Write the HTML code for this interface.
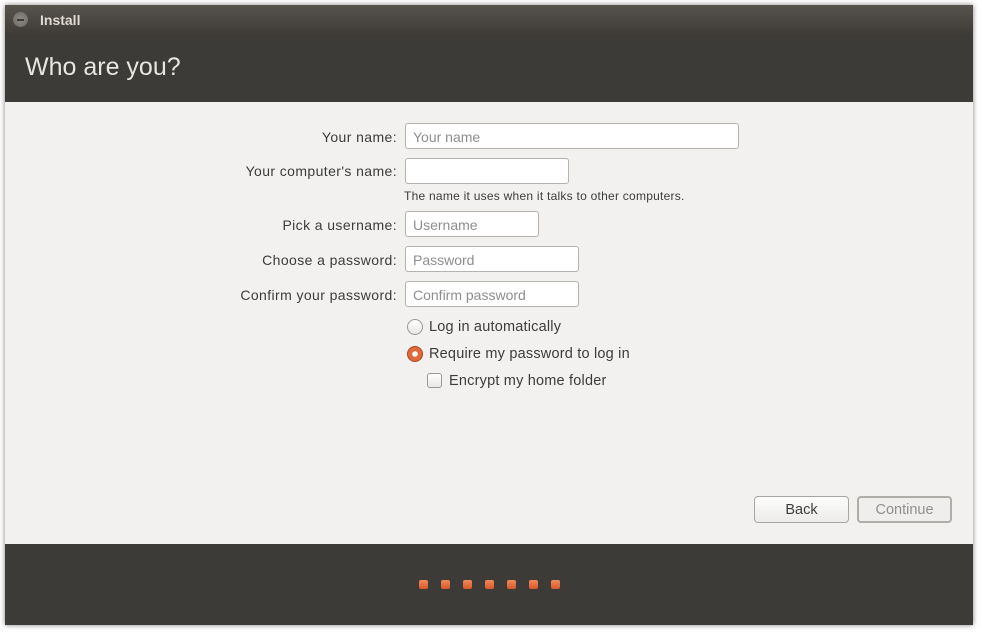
<!DOCTYPE html>
<html><head><meta charset="utf-8"><style>
*{box-sizing:border-box;margin:0;padding:0}
body{width:982px;height:634px;background:#fff;position:relative;font-family:"Liberation Sans","DejaVu Sans",sans-serif;overflow:hidden}
.win{position:absolute;left:5px;top:5px;width:968px;height:620px;box-shadow:0 0 5px rgba(0,0,0,.5);background:#f2f1f0}
.tb{position:absolute;left:0;top:0;width:968px;height:30px;background:linear-gradient(#57544e,#3e3b37)}
.tb .c{position:absolute;left:8px;top:7px;width:15px;height:15px;border-radius:50%;background:radial-gradient(#8d8a84,#6b6863);}
.tb .c:after{content:"";position:absolute;left:4px;top:7px;width:7px;height:1.5px;background:#3c3a36}
.tb .t{position:absolute;left:35px;top:7px;color:#dfdbd2;font-weight:bold;font-size:14px}
.hd{position:absolute;left:0;top:30px;width:968px;height:67px;background:#3c3b37;color:#e8e6e1;font-size:25px;padding:18px 0 0 20px}
.ft{position:absolute;left:0;top:539px;width:968px;height:81px;background:#3c3b37}
.dot{position:absolute;top:580px;width:9px;height:9px;border-radius:2px;background:linear-gradient(#f08a5a,#d8582a)}
.lbl{position:absolute;right:585px;font-size:14px;letter-spacing:.4px;color:#3c3c3c;text-align:right;white-space:nowrap}
.in{position:absolute;left:405px;height:26px;border:1px solid #b6b3ae;border-radius:3px;background:#fff;font-size:14px;color:#8e8e8e;padding:5px 0 0 7px}
.hint{position:absolute;left:404px;top:189px;font-size:12px;letter-spacing:.25px;color:#3c3c3c}
.opt{position:absolute;font-size:14.5px;letter-spacing:.2px;color:#3c3c3c}
.rb{position:absolute;width:16px;height:16px;border-radius:50%;border:1px solid #9a9893;background:linear-gradient(#fff,#e8e7e5)}
.rb.on{border-color:#a84a22;background:radial-gradient(#fff 0 2.5px,#e06a3c 3px)}
.cb{position:absolute;width:15px;height:15px;border-radius:3px;border:1px solid #9a9893;background:linear-gradient(#fff,#e8e7e5)}
.btn{position:absolute;top:496px;height:27px;border:1px solid #a9a6a1;border-radius:4px;background:linear-gradient(#fdfdfd,#ecebe9);font-size:14.5px;text-align:center;padding-top:5px}
</style></head><body>
<div class="win">
<div class="tb"><div class="c"></div><div class="t">Install</div></div>
<div class="hd">Who are you?</div>
<div class="ft"></div>
</div>
<div class="lbl" style="top:129px">Your name:</div>
<div class="in" style="top:123px;width:334px">Your name</div>
<div class="lbl" style="top:163px">Your computer's name:</div>
<div class="in" style="top:158px;width:164px"></div>
<div class="hint">The name it uses when it talks to other computers.</div>
<div class="lbl" style="top:217px">Pick a username:</div>
<div class="in" style="top:211px;width:134px">Username</div>
<div class="lbl" style="top:252px">Choose a password:</div>
<div class="in" style="top:246px;width:174px">Password</div>
<div class="lbl" style="top:287px">Confirm your password:</div>
<div class="in" style="top:281px;width:174px">Confirm password</div>
<div class="rb" style="left:407px;top:319px"></div><div class="opt" style="left:429px;top:319px">Log in automatically</div>
<div class="rb on" style="left:407px;top:346px"></div><div class="opt" style="left:429px;top:346px">Require my password to log in</div>
<div class="cb" style="left:427px;top:373px"></div><div class="opt" style="left:449px;top:373px">Encrypt my home folder</div>
<div class="btn" style="left:754px;width:95px;color:#3c3c3c">Back</div>
<div class="btn" style="left:857px;width:95px;color:#8f8f8f;border:2px solid #b0ada8;background:#efeeec;padding-top:4px">Continue</div>
<div class="dot" style="left:419px"></div><div class="dot" style="left:441px"></div><div class="dot" style="left:463px"></div><div class="dot" style="left:485px"></div><div class="dot" style="left:507px"></div><div class="dot" style="left:529px"></div><div class="dot" style="left:551px"></div>
</body></html>
